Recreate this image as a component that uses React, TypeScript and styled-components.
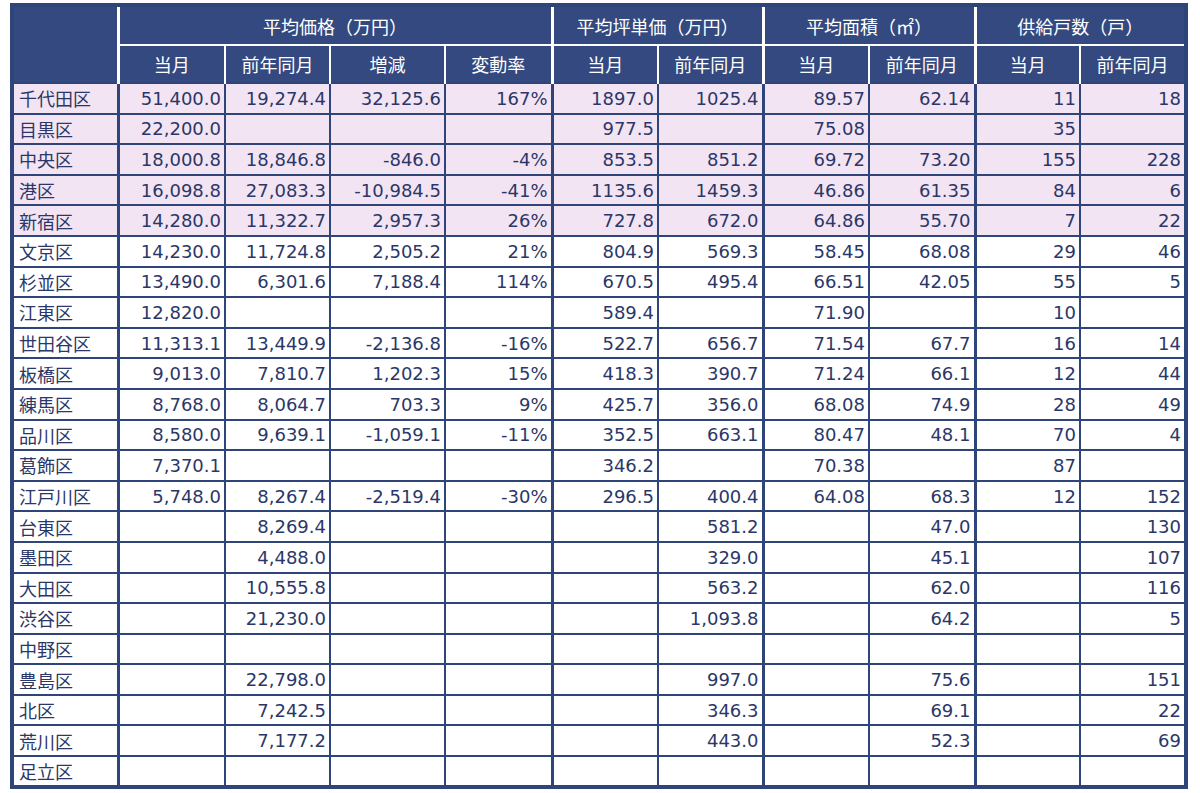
import React from "react";
import styled, { createGlobalStyle } from "styled-components";

const NAVY = "#33497f";
const LINE = "#2f4579";
const TEXT = "#2b3768";
const PINK = "#f3e4f3";

const Global = createGlobalStyle`
  html, body { margin: 0; padding: 0; background: #ffffff; }
  body { font-family: "DejaVu Sans", "Noto Sans CJK JP", sans-serif; }
`;

const Page = styled.div`
  padding: 3px 0 0 10px;
`;

const Table = styled.table`
  border-collapse: collapse;
  table-layout: fixed;
  width: 1176px;
  border: 4px solid ${LINE};
  font-family: "DejaVu Sans", "Noto Sans CJK JP", sans-serif;
  font-size: 18px;
`;

const GroupRow = styled.tr`
  height: 40px;
`;

const SubRow = styled.tr`
  height: 38px;
`;

const DataRow = styled.tr<{ $pink?: boolean }>`
  height: 30.6px;
  background: ${(p) => (p.$pink ? PINK : "#ffffff")};
`;

const Corner = styled.th`
  background: ${NAVY};
  border-right: 3px solid #ffffff;
  border-bottom: none;
`;

const GroupHead = styled.th<{ $last?: boolean }>`
  background: ${NAVY};
  color: #ffffff;
  font-weight: normal;
  font-family: "Noto Sans CJK JP", sans-serif;
  font-size: 18px;
  text-align: center;
  padding: 0;
  border-right: ${(p) => (p.$last ? "none" : "3px solid #ffffff")};
  border-bottom: 2px solid #ffffff;
`;

const SubHead = styled.th<{ $edge?: boolean; $last?: boolean }>`
  background: ${NAVY};
  color: #ffffff;
  font-weight: normal;
  font-family: "Noto Sans CJK JP", sans-serif;
  font-size: 18px;
  text-align: center;
  padding: 0;
  border-right: ${(p) =>
    p.$last ? "none" : p.$edge ? "3px solid #ffffff" : "2px solid #ffffff"};
  border-bottom: none;
`;

const NameCell = styled.td`
  color: ${TEXT};
  font-family: "Noto Sans CJK JP", sans-serif;
  text-align: left;
  padding: 0 0 0 5px;
  white-space: nowrap;
  border-top: 2px solid ${LINE};
  border-right: 3px solid ${LINE};
`;

const NumCell = styled.td<{ $edge?: boolean }>`
  color: ${TEXT};
  text-align: right;
  padding: 0 3px 0 0;
  white-space: nowrap;
  border-top: 2px solid ${LINE};
  border-right: ${(p) => (p.$edge ? "3px" : "2px")} solid ${LINE};
`;

const widths = [106, 107, 105, 115, 107, 106, 105, 106, 106, 105, 106];
const edges = new Set([3, 5, 7]);

type Row = [string, ...string[]];

const rows: Row[] = [
  ["千代田区", "51,400.0", "19,274.4", "32,125.6", "167%", "1897.0", "1025.4", "89.57", "62.14", "11", "18"],
  ["目黒区", "22,200.0", "", "", "", "977.5", "", "75.08", "", "35", ""],
  ["中央区", "18,000.8", "18,846.8", "-846.0", "-4%", "853.5", "851.2", "69.72", "73.20", "155", "228"],
  ["港区", "16,098.8", "27,083.3", "-10,984.5", "-41%", "1135.6", "1459.3", "46.86", "61.35", "84", "6"],
  ["新宿区", "14,280.0", "11,322.7", "2,957.3", "26%", "727.8", "672.0", "64.86", "55.70", "7", "22"],
  ["文京区", "14,230.0", "11,724.8", "2,505.2", "21%", "804.9", "569.3", "58.45", "68.08", "29", "46"],
  ["杉並区", "13,490.0", "6,301.6", "7,188.4", "114%", "670.5", "495.4", "66.51", "42.05", "55", "5"],
  ["江東区", "12,820.0", "", "", "", "589.4", "", "71.90", "", "10", ""],
  ["世田谷区", "11,313.1", "13,449.9", "-2,136.8", "-16%", "522.7", "656.7", "71.54", "67.7", "16", "14"],
  ["板橋区", "9,013.0", "7,810.7", "1,202.3", "15%", "418.3", "390.7", "71.24", "66.1", "12", "44"],
  ["練馬区", "8,768.0", "8,064.7", "703.3", "9%", "425.7", "356.0", "68.08", "74.9", "28", "49"],
  ["品川区", "8,580.0", "9,639.1", "-1,059.1", "-11%", "352.5", "663.1", "80.47", "48.1", "70", "4"],
  ["葛飾区", "7,370.1", "", "", "", "346.2", "", "70.38", "", "87", ""],
  ["江戸川区", "5,748.0", "8,267.4", "-2,519.4", "-30%", "296.5", "400.4", "64.08", "68.3", "12", "152"],
  ["台東区", "", "8,269.4", "", "", "", "581.2", "", "47.0", "", "130"],
  ["墨田区", "", "4,488.0", "", "", "", "329.0", "", "45.1", "", "107"],
  ["大田区", "", "10,555.8", "", "", "", "563.2", "", "62.0", "", "116"],
  ["渋谷区", "", "21,230.0", "", "", "", "1,093.8", "", "64.2", "", "5"],
  ["中野区", "", "", "", "", "", "", "", "", "", ""],
  ["豊島区", "", "22,798.0", "", "", "", "997.0", "", "75.6", "", "151"],
  ["北区", "", "7,242.5", "", "", "", "346.3", "", "69.1", "", "22"],
  ["荒川区", "", "7,177.2", "", "", "", "443.0", "", "52.3", "", "69"],
  ["足立区", "", "", "", "", "", "", "", "", "", ""],
];

const subHeads = ["当月", "前年同月", "増減", "変動率", "当月", "前年同月", "当月", "前年同月", "当月", "前年同月"];

export default function App() {
  return (
    <Page>
      <Global />
      <Table>
        <colgroup>
          {widths.map((w, i) => (
            <col key={i} style={{ width: w }} />
          ))}
        </colgroup>
        <thead>
          <GroupRow>
            <Corner rowSpan={2} />
            <GroupHead colSpan={4}>平均価格（万円）</GroupHead>
            <GroupHead colSpan={2}>平均坪単価（万円）</GroupHead>
            <GroupHead colSpan={2}>平均面積（㎡）</GroupHead>
            <GroupHead colSpan={2} $last>
              供給戸数（戸）
            </GroupHead>
          </GroupRow>
          <SubRow>
            {subHeads.map((h, i) => (
              <SubHead key={i} $edge={edges.has(i)} $last={i === subHeads.length - 1}>
                {h}
              </SubHead>
            ))}
          </SubRow>
        </thead>
        <tbody>
          {rows.map((r, ri) => {
            const [name, ...vals] = r;
            return (
              <DataRow key={name} $pink={ri < 5}>
                <NameCell>{name}</NameCell>
                {vals.map((v, i) => (
                  <NumCell key={i} $edge={edges.has(i)}>
                    {v}
                  </NumCell>
                ))}
              </DataRow>
            );
          })}
        </tbody>
      </Table>
    </Page>
  );
}
